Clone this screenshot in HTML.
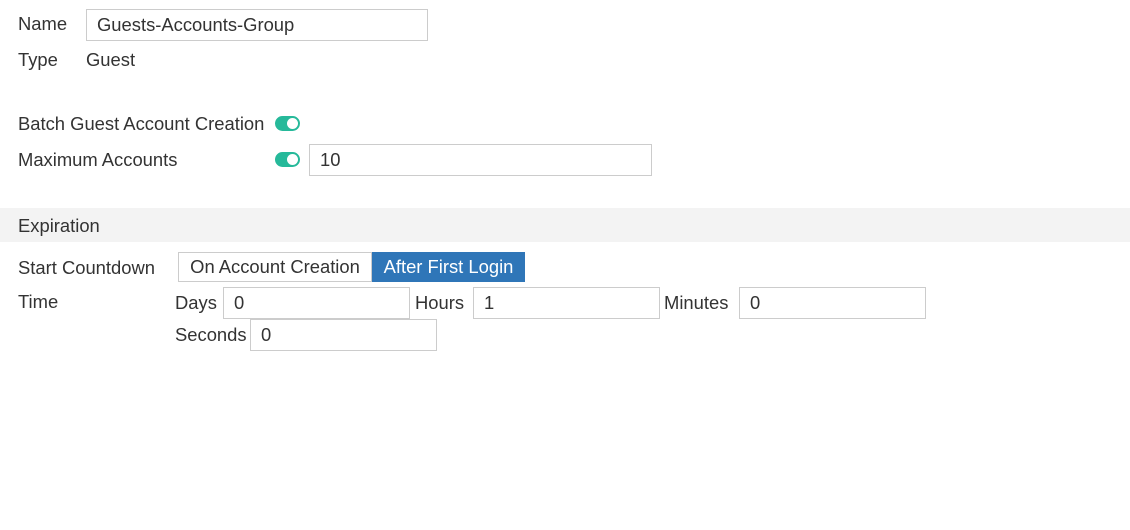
<!DOCTYPE html>
<html><head><style>
body{margin:0;width:1130px;height:530px;background:#fff;font-family:"Liberation Sans",sans-serif;font-size:18.4px;color:#333;position:relative;overflow:hidden}
.a{position:absolute;line-height:22px;white-space:nowrap}
.in{position:absolute;box-sizing:border-box;border:1px solid #ccc;background:#fff;padding-left:10px;line-height:30px;white-space:nowrap}
.tg{position:absolute;width:25px;height:15px;border-radius:8px;background:#26b99a}
.tg::after{content:"";position:absolute;right:2px;top:2px;width:11px;height:11px;border-radius:50%;background:#fff}
</style></head><body>
<div class="a" style="left:18px;top:13px">Name</div>
<div class="in" style="left:86px;top:9px;width:342px;height:32px">Guests-Accounts-Group</div>
<div class="a" style="left:18px;top:49px">Type</div>
<div class="a" style="left:86px;top:49px">Guest</div>
<div class="a" style="left:18px;top:113px">Batch Guest Account Creation</div>
<div class="tg" style="left:275px;top:116px"></div>
<div class="a" style="left:18px;top:149px">Maximum Accounts</div>
<div class="tg" style="left:275px;top:152px"></div>
<div class="in" style="left:309px;top:144px;width:343px;height:32px">10</div>
<div style="position:absolute;left:0;top:208px;width:1130px;height:34px;background:#f3f3f3"></div>
<div class="a" style="left:18px;top:215px">Expiration</div>
<div class="a" style="left:18px;top:257px">Start Countdown</div>
<div style="position:absolute;left:178px;top:252px;width:194px;height:30px;box-sizing:border-box;border:1px solid #ccc;line-height:28px;text-align:center;white-space:nowrap">On Account Creation</div>
<div style="position:absolute;left:372px;top:252px;width:153px;height:30px;background:#2f76b8;color:#fff;line-height:30px;text-align:center;white-space:nowrap">After First Login</div>
<div class="a" style="left:18px;top:291px">Time</div>
<div class="a" style="left:175px;top:292px">Days</div>
<div class="in" style="left:223px;top:287px;width:187px;height:32px">0</div>
<div class="a" style="left:415px;top:292px">Hours</div>
<div class="in" style="left:473px;top:287px;width:187px;height:32px">1</div>
<div class="a" style="left:664px;top:292px">Minutes</div>
<div class="in" style="left:739px;top:287px;width:187px;height:32px">0</div>
<div class="a" style="left:175px;top:324px">Seconds</div>
<div class="in" style="left:250px;top:319px;width:187px;height:32px">0</div>
</body></html>
